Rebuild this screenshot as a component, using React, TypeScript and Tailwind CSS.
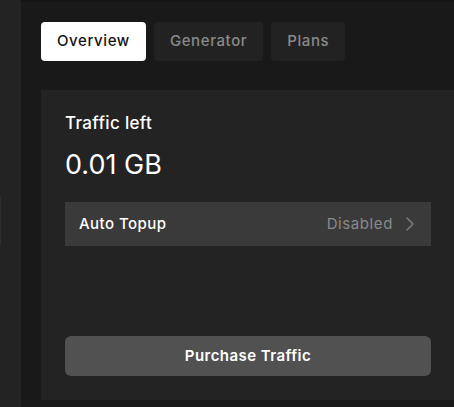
import { ChevronRight } from 'lucide-react';

const tabs = ['Overview', 'Generator', 'Plans'];

const App = () => {
  return (
    <div
      className="flex h-[407px] w-[454px] overflow-hidden bg-[#191919] text-white"
      style={{ fontFamily: 'Inter, "Noto Sans", sans-serif' }}
    >
      {/* Sidebar edge */}
      <div className="flex w-[21px] shrink-0 flex-col bg-[#232323] pt-[197px]">
        <div className="h-[48px] w-px bg-[#2e2e2e]" />
      </div>

      <div className="flex flex-col border-t-2 border-[#141414] pl-[20px] pt-[20px]">
        {/* Tabs */}
        <div className="flex gap-2">
          {tabs.map((tab, i) => (
            <button
              key={tab}
              className={
                i === 0
                  ? 'h-[39px] rounded-[4px] bg-white px-4 text-[15px] font-medium tracking-[0.04em] text-[#141414]'
                  : 'h-[39px] rounded-[4px] bg-[#222222] px-4 text-[15px] font-medium tracking-[0.04em] text-[#8a8a8a]'
              }
            >
              {tab}
            </button>
          ))}
        </div>

        {/* Traffic card */}
        <div className="mt-[29px] flex h-[310px] w-[414px] shrink-0 flex-col bg-[#232323] px-6 pt-[21px] pb-6">
          <p className="text-[17px] font-medium leading-6 tracking-[0.02em]">Traffic left</p>
          <p className="mt-[14px] text-[27px] font-normal leading-8">0.01 GB</p>
          <button className="mt-[21px] flex h-[44px] items-center justify-between bg-[#3a3a3a] pl-[14px] pr-[9px] text-[15px]">
            <span className="font-medium tracking-[0.03em]">Auto Topup</span>
            <span className="flex items-center gap-[5px] tracking-[0.04em] text-[#8a8a8a]">
              Disabled
              <ChevronRight size={24} strokeWidth={1.5} className="text-[#7c7c7c]" />
            </span>
          </button>
          <button className="mt-auto h-[40px] rounded-[6px] bg-[#515151] text-[15px] font-semibold tracking-[0.03em]">
            Purchase Traffic
          </button>
        </div>
      </div>
    </div>
  );
};

export default App;
